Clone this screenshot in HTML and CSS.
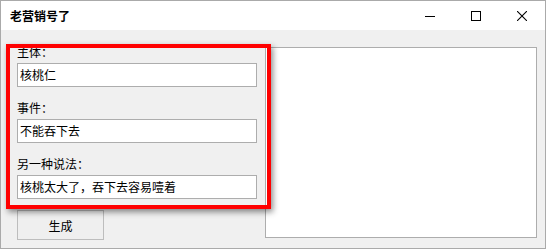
FILE: index.html
```html
<!DOCTYPE html>
<html lang="zh">
<head>
<meta charset="UTF-8" />
<title>老营销号了</title>
<link rel="stylesheet" href="styles.css">
</head>
<body>
  <div class="window">
    <div class="titlebar">
      <span class="title">老营销号了</span>
      <div class="caption">
        <span class="cap-btn">
          <svg width="10" height="10" viewBox="0 0 10 10"><path d="M0 5.5H10" stroke="#000" stroke-width="1" /></svg>
        </span>
        <span class="cap-btn">
          <svg width="10" height="10" viewBox="0 0 10 10"><rect x="0.5" y="0.5" width="9" height="9" fill="none" stroke="#000" stroke-width="1" /></svg>
        </span>
        <span class="cap-btn">
          <svg width="10" height="10" viewBox="0 0 10 10"><path d="M0 0L10 10M10 0L0 10" stroke="#000" stroke-width="1.1" /></svg>
        </span>
      </div>
    </div>
    <div class="client">
      <div class="form">
        <div class="label first">主体：</div>
        <div class="textbox">核桃仁</div>
        <div class="label">事件：</div>
        <div class="textbox">不能吞下去</div>
        <div class="label">另一种说法：</div>
        <div class="textbox">核桃太大了，吞下去容易噎着</div>
        <button class="gen">生成</button>
      </div>
      <div class="output"></div>
      <!-- annotation frame drawn over the form -->
      <div class="highlight"></div>
    </div>
  </div>
</body>
</html>
```

FILE: styles.css
```css
body {
  margin: 0;
  font-family: "Noto Sans CJK SC", sans-serif;
  font-size: 12px;
  color: #000;
  background: #fff;
}
.window {
  width: 546px;
  height: 249px;
  box-sizing: border-box;
  border: 1px solid #aaa;
  background: #f0f0f0;
  display: flex;
  flex-direction: column;
}
.titlebar {
  height: 29px;
  background: #fff;
  display: flex;
  align-items: center;
  justify-content: space-between;
}
.title {
  padding-left: 9px;
  font-weight: bold;
  font-size: 12px;
}
.caption { display: flex; height: 29px; }
.cap-btn {
  width: 46px;
  display: flex;
  align-items: center;
  justify-content: center;
}
.cap-btn svg { display: block; }
.client {
  position: relative;
  flex: 1;
  display: flex;
  padding: 14px 7px 0 16px;
  gap: 8px;
}
.form {
  width: 240px;
  display: flex;
  flex-direction: column;
  align-items: flex-start;
}
.label {
  line-height: 15px;
  margin-top: 13px;
}
.label.first { margin-top: 0; }
.textbox {
  margin-top: 4px;
  width: 240px;
  height: 24px;
  box-sizing: border-box;
  border: 1px solid #adadad;
  background: #fff;
  padding: 3px 0 0 2px;
  line-height: 15px;
  font-size: 12px;
}
button.gen {
  margin-top: 11px;
  width: 87px;
  height: 30px;
  border: 1px solid #bdbdbd;
  background: #efefef;
  font-family: inherit;
  font-size: 12px;
  padding: 0;
}
.output {
  margin-top: 3px;
  width: 272px;
  height: 191px;
  box-sizing: border-box;
  border: 1px solid #adadad;
  background: #fff;
}
.highlight {
  position: absolute;
  left: 5px;
  top: 14px;
  width: 265px;
  height: 165px;
  box-sizing: border-box;
  border: 4px solid #ff0000;
  box-shadow: 2px 3px 6px rgba(0, 0, 0, 0.45);
}
```
